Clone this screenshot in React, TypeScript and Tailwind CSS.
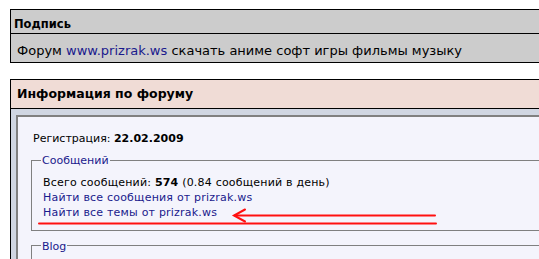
export default function App() {
  return (
    <div className="relative w-[539px] h-[259px] overflow-hidden bg-white text-[11px] text-black font-['DejaVu_Sans',Verdana,sans-serif]">
      <div className="pt-[9px] pl-[10px]">
        {/* Подпись */}
        <div className="w-[600px] border border-black bg-[#cccccc]">
          <div className="h-[24px] border-b border-black pl-[3px] pt-[6px] flex items-center font-bold text-[11.5px]">
            Подпись
          </div>
          <div className="h-[28px] pl-[6px] pt-[5px] flex items-center text-[13px]">
            Форум&nbsp;<a className="text-[#1a1a8c]">www.prizrak.ws</a>&nbsp;скачать аниме софт игры фильмы музыку
          </div>
        </div>

        {/* Информация по форуму */}
        <div className="mt-[16px] w-[600px] border-t border-l border-black">
          <div className="h-[29px] border-b border-black bg-[#f0dcd6] pl-[6px] pt-[1px] flex items-center font-bold text-[12.5px]">
            Информация по форуму
          </div>
          <div className="bg-[#d0d6e2] pt-[6px] pl-[5px]">
            <div className="h-[200px] border-t-2 border-l-2 border-[#808080] bg-[#f4f4fc] pl-[15px] pt-[15px]">
              <div className="leading-[13px]">
                Регистрация: <b>22.02.2009</b>
              </div>

              <div className="mt-[15px] -ml-[2px] border border-[#808080] pl-[11px] pb-[10px] leading-[15px] tracking-[0.2px]">
                <div className="-mt-[7px] -ml-[2px] w-fit bg-[#f4f4fc] px-[1px] text-[#1a1a8c] leading-[13px] tracking-normal">
                  Сообщений
                </div>
                <div className="mt-[8px]">
                  Всего сообщений: <b>574</b> (0.84 сообщений в день)
                </div>
                <div>
                  <a className="text-[#1a1a8c]">Найти все сообщения от prizrak.ws</a>
                </div>
                <div>
                  <a className="text-[#1a1a8c]">Найти все темы от prizrak.ws</a>
                </div>
              </div>

              <div className="mt-[14px] -ml-[2px] h-[40px] border border-[#808080] pl-[11px]">
                <div className="-mt-[6px] -ml-[2px] w-fit bg-[#f4f4fc] px-[1px] text-[#1a1a8c] leading-[13px]">
                  Blog
                </div>
              </div>
            </div>
          </div>
        </div>
      </div>

      {/* red annotation arrow */}
      <svg className="absolute left-0 top-0 pointer-events-none" width="539" height="259">
        <g stroke="#ff1010" strokeWidth="2" fill="none" strokeLinecap="round">
          <line x1="235" y1="215.5" x2="435" y2="215.5" />
          <polyline points="245,209.5 234,215.5 245,221.5" />
          <line x1="39" y1="223.5" x2="436" y2="223.5" />
        </g>
      </svg>
    </div>
  );
}
